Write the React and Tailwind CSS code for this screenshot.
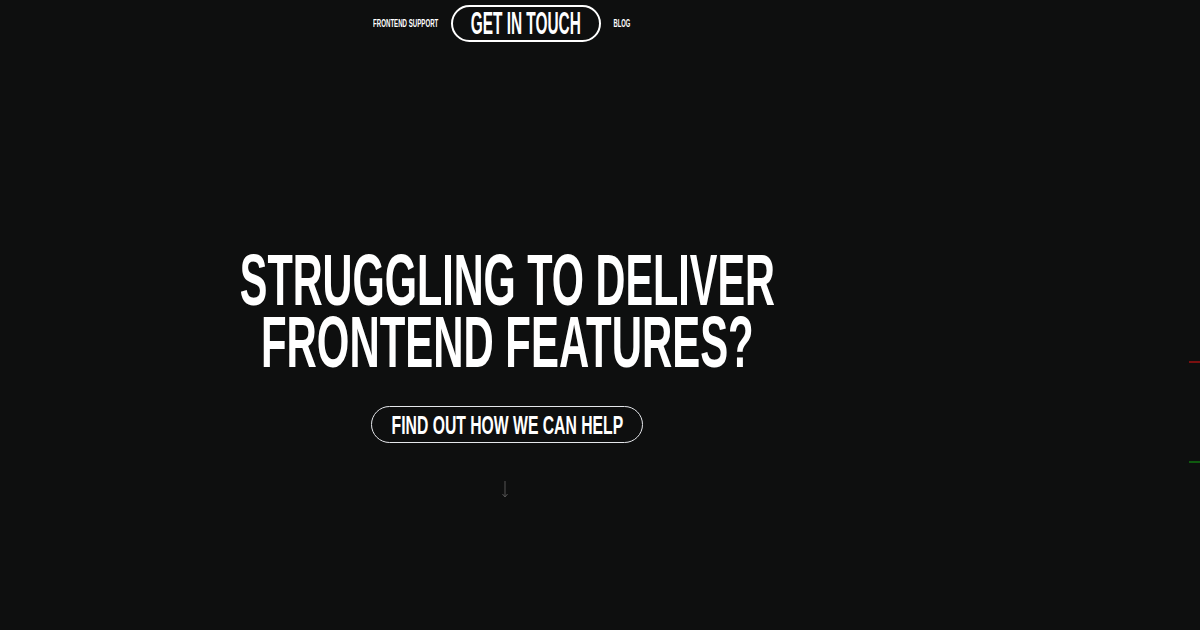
import React from 'react';

const display = {
  fontFamily: '"Liberation Sans", Arial, sans-serif',
};

// Condensed look: fixed-width box, text squeezed horizontally inside it
function Squeeze({ width, scale, className = '', children }) {
  return (
    <span className={`flex justify-center ${className}`} style={{ width }}>
      <span className="whitespace-nowrap" style={{ scale: `${scale} 1` }}>
        {children}
      </span>
    </span>
  );
}

function Nav() {
  return (
    <nav className="flex items-center justify-center gap-[13px] pr-[11px] pt-[5px]" style={display}>
      <Squeeze width={65} scale={0.556} className="text-[11px] font-bold uppercase text-white">
        Frontend Support
      </Squeeze>
      <a className="flex h-[37px] w-[150px] items-center justify-center rounded-full border-2 border-white text-[31px] font-bold uppercase leading-none text-white">
        <Squeeze width={110} scale={0.497}>Get in touch</Squeeze>
      </a>
      <Squeeze width={16} scale={0.53} className="text-[11px] font-bold uppercase text-white">
        Blog
      </Squeeze>
    </nav>
  );
}

export default function App() {
  return (
    <div className="relative h-[630px] w-[1200px] overflow-hidden bg-[#0e0f0f]">
      <div className="w-[1014px]">
        <Nav />
        <section className="flex flex-col items-center pt-[207px]" style={display}>
          <h1 className="flex flex-col items-center text-[72px] font-bold uppercase leading-[62px] text-white">
            <Squeeze width={533} scale={0.575}>Struggling to deliver</Squeeze>
            <Squeeze width={489} scale={0.582}>frontend features?</Squeeze>
          </h1>
          <a className="mt-[33px] flex h-[37px] w-[272px] items-center justify-center rounded-full border-[1.5px] border-gray-200 text-[26px] font-bold uppercase leading-none text-white">
            <Squeeze width={231} scale={0.605}>Find out how we can help</Squeeze>
          </a>
          <svg className="mr-[4px] mt-[37px]" width="8" height="18" viewBox="0 0 8 18" fill="none">
            <path d="M4 1v16M1.5 14L4 17l2.5-3" stroke="#555" strokeWidth="1" />
          </svg>
        </section>
      </div>
      <div className="absolute right-0 top-[361px] h-[2px] w-[11px] bg-[#7a1010]" />
      <span className="absolute right-[-6px] top-[364px] text-[10px] font-bold text-[#d01010]">S</span>
      <span className="absolute right-[-6px] top-[451px] text-[9px] font-bold text-[#158a15]">S</span>
      <div className="absolute right-0 top-[461px] h-[2px] w-[11px] bg-[#0f5a0f]" />
    </div>
  );
}
